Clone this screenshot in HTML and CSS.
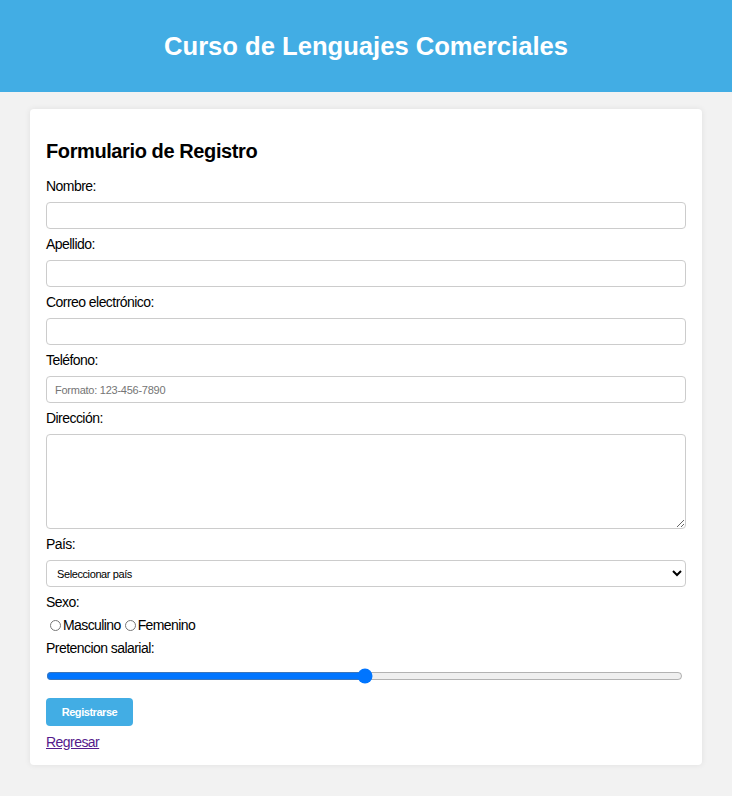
FILE: index.html
```html
<!DOCTYPE html>
<html lang="es">
<head>
<meta charset="utf-8">
<title>Registro</title>
<link rel="stylesheet" href="styles.css">
</head>
<body>
<header class="site-header">
  <h1>Curso de Lenguajes Comerciales</h1>
</header>
<main class="card">
  <h2>Formulario de Registro</h2>
  <form class="form">
    <label for="nombre">Nombre:</label>
    <input type="text" id="nombre" class="field">
    <label for="apellido">Apellido:</label>
    <input type="text" id="apellido" class="field">
    <label for="correo">Correo electrónico:</label>
    <input type="email" id="correo" class="field">
    <label for="tel">Teléfono:</label>
    <input type="tel" id="tel" class="field" placeholder="Formato: 123-456-7890">
    <label for="dir">Dirección:</label>
    <textarea id="dir" class="field area"></textarea>
    <label for="pais">País:</label>
    <select id="pais" class="field select">
      <option>Seleccionar país</option>
    </select>
    <label>Sexo:</label>
    <div class="radios">
      <input type="radio" name="sexo" id="m"><span>Masculino</span>
      <input type="radio" name="sexo" id="f"><span>Femenino</span>
    </div>
    <label for="sal">Pretencion salarial:</label>
    <input type="range" id="sal" class="range" min="0" max="100" value="50">
    <button type="button" class="btn">Registrarse</button>
  </form>
  <a href="#" class="back">Regresar</a>
</main>
</body>
</html>
```
FILE: styles.css
```css
html, body {
  margin: 0;
  padding: 0;
}
body {
  background: #f2f2f2;
  font-family: "Liberation Sans", Arial, sans-serif;
  color: #000;
  min-height: 796px;
}
.site-header {
  background: #42ade4;
  height: 92px;
  display: flex;
  align-items: center;
  justify-content: center;
}
.site-header h1 {
  margin: 0;
  color: #fff;
  font-size: 25.6px;
  font-weight: bold;
}
.card {
  width: 640px;
  margin: 17px auto 0;
  background: #fff;
  padding: 16px 16px 14px;
  border-radius: 4px;
  box-shadow: 0 0 6px rgba(0,0,0,0.08);
}
.card h2 {
  margin: 15px 0 15px;
  font-size: 20px;
  font-weight: bold;
  letter-spacing: -0.4px;
}
.form {
  display: flex;
  flex-direction: column;
  align-items: flex-start;
}
.form label {
  font-size: 14px;
  line-height: 16px;
  letter-spacing: -0.55px;
  margin-bottom: 8px;
}
.field {
  box-sizing: border-box;
  width: 100%;
  height: 27px;
  margin: 0 0 7px;
  border: 1px solid #ccc;
  border-radius: 4px;
  padding: 4px 8px;
  font-family: "Liberation Sans", Arial, sans-serif;
  font-size: 11px;
  letter-spacing: -0.25px;
  background: #fff;
}
.field::placeholder {
  color: #757575;
}
.area {
  height: 95px;
  resize: vertical;
}
.select {
  height: 27px;
  padding: 2px 6px;
  color: #000;
  letter-spacing: -0.4px;
}
.radios {
  display: flex;
  align-items: center;
  font-size: 14px;
  letter-spacing: -0.6px;
  margin: -2px 0 6px;
  height: 18px;
}
.radios input {
  margin: 0 2px 0 4px;
  width: 11px;
  height: 11px;
}
.range {
  width: 637px;
  margin: 4px 0 14px;
}
.btn {
  background: #42ade4;
  color: #fff;
  border: none;
  border-radius: 4px;
  width: 87px;
  height: 28px;
  font-family: "Liberation Sans", Arial, sans-serif;
  font-size: 11px;
  letter-spacing: -0.45px;
  font-weight: bold;
  cursor: pointer;
}
.back {
  display: inline-block;
  margin-top: 8px;
  font-size: 14px;
  letter-spacing: -0.55px;
  color: #551a8b;
}
```
